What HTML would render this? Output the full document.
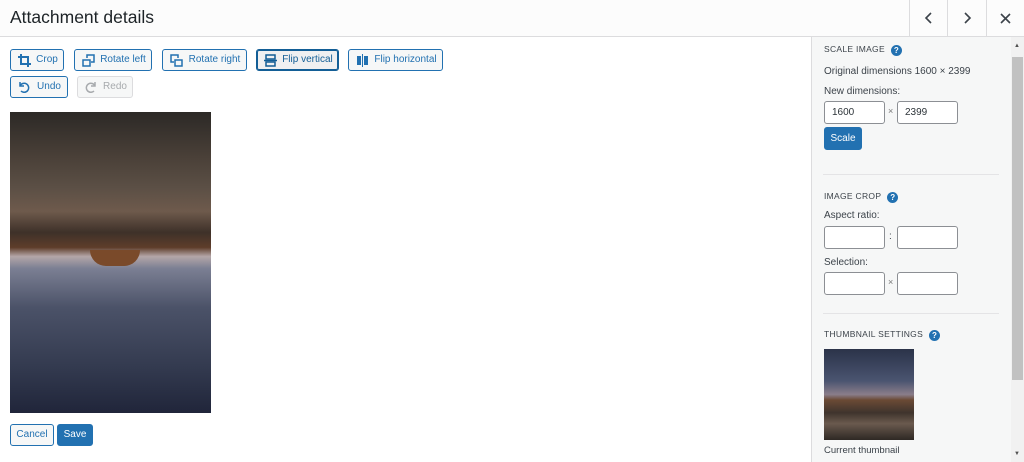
<!DOCTYPE html>
<html><head><style>
*{box-sizing:border-box;margin:0;padding:0}
body{width:1024px;height:462px;overflow:hidden;background:#fff;font-family:"Liberation Sans",sans-serif;color:#3c434a;font-size:10px;position:relative}
.hdr{position:absolute;left:0;top:0;width:1024px;height:37px;background:#fcfcfc;border-bottom:1px solid #dcdcde}
.hdr h1{position:absolute;left:10px;top:7px;font-size:17.5px;font-weight:normal;color:#1d2327}
.nav{position:absolute;top:0;height:36px;width:39px;border-left:1px solid #dcdcde}
.nav svg{position:absolute;left:14px;top:12px}
.b{position:absolute;height:22px;border:1px solid #2271b1;border-radius:3px;background:#f6f7f7;color:#2271b1;font-size:10px;line-height:20px;padding-left:20px;text-align:center;white-space:nowrap}
.b svg{position:absolute;left:7px;top:4px}
.b.dis{border-color:#dcdcde;color:#a7aaad}
.b.act{border-color:#135e96;box-shadow:0 0 0 1px #135e96 inset;background:#f0f0f1}
.side{position:absolute;left:811px;top:37px;width:213px;height:425px;background:#f6f7f7;border-left:1px solid #dcdcde}
.t{position:absolute;font-size:10px;color:#3c434a;white-space:nowrap}
.h{position:absolute;font-size:8.5px;text-transform:uppercase;color:#3c434a;letter-spacing:.3px;white-space:nowrap}
.q{display:inline-block;width:11px;height:11px;border-radius:50%;background:#2271b1;color:#fff;font-size:8px;font-weight:bold;text-align:center;line-height:11px;margin-left:6px;vertical-align:-1px}
.in{position:absolute;width:61px;height:23px;border:1px solid #8c8f94;border-radius:3px;background:#fff;padding-left:7px;line-height:21px;font-size:10px;color:#2c3338}
.hr{position:absolute;left:823px;width:176px;height:1px;background:#e4e4e6}
</style></head><body>
<div class="hdr"><h1>Attachment details</h1>
<div class="nav" style="left:909px"><svg width="10" height="12" viewBox="0 0 10 12" fill="none" stroke="#3c434a" stroke-width="1.6"><path d="M7 1L2 6l5 5"/></svg></div>
<div class="nav" style="left:947px"><svg width="10" height="12" viewBox="0 0 10 12" fill="none" stroke="#3c434a" stroke-width="1.6"><path d="M3 1l5 5-5 5"/></svg></div>
<div class="nav" style="left:986px;width:38px"><svg width="11" height="11" viewBox="0 0 11 11" fill="none" stroke="#3c434a" stroke-width="1.6" style="left:13px;top:13px"><path d="M1 1l9 9M10 1l-9 9"/></svg></div></div>

<div class="b" style="left:10px;top:49px;width:54px"><svg width="13" height="13" viewBox="0 0 13 13" fill="none" stroke="#2271b1" stroke-width="2"><path d="M3 0v10h10M0 3h10v10"/></svg>Crop</div>
<div class="b" style="left:74px;top:49px;width:78px"><svg width="13" height="13" viewBox="0 0 13 13" fill="none" stroke="#2271b1" stroke-width="1.5"><rect x="1" y="6" width="7" height="6"/><path d="M5 4V1h7v7H9"/></svg>Rotate left</div>
<div class="b" style="left:162px;top:49px;width:85px"><svg width="13" height="13" viewBox="0 0 13 13" fill="none" stroke="#2271b1" stroke-width="1.5"><rect x="5" y="6" width="7" height="6"/><path d="M8 4V1H1v7h3"/></svg>Rotate right</div>
<div class="b act" style="left:256px;top:49px;width:83px"><svg width="13" height="13" viewBox="0 0 13 13" fill="none" stroke="#135e96" stroke-width="1.5"><rect x="2" y="1" width="9" height="4"/><rect x="2" y="8" width="9" height="4"/><path d="M0 6.5h13"/></svg><span style="color:#135e96">Flip vertical</span></div>
<div class="b" style="left:348px;top:49px;width:95px"><svg width="13" height="13" viewBox="0 0 13 13" fill="#2271b1"><rect x="1" y="2" width="4" height="9"/><rect x="8" y="2" width="4" height="9"/><rect x="6" y="0" width="1" height="13"/></svg>Flip horizontal</div>
<div class="b" style="left:10px;top:76px;width:58px"><svg width="12" height="12" viewBox="0 0 12 12" fill="none" stroke="#2271b1" stroke-width="1.5"><path d="M2 1v4h4M2 5a4.5 4.5 0 1 1 1 5"/></svg>Undo</div>
<div class="b dis" style="left:77px;top:76px;width:56px"><svg width="12" height="12" viewBox="0 0 12 12" fill="none" stroke="#a7aaad" stroke-width="1.5"><path d="M10 1v4H6M10 5a4.5 4.5 0 1 0-1 5"/></svg>Redo</div>

<div style="position:absolute;left:10px;top:112px;width:201px;height:301px;background:linear-gradient(180deg,#2c2926 0%,#4a4038 15%,#5b4f45 25%,#6e5a4c 33%,#3e3129 40%,#5e3d2a 45%,#b4a6a8 48%,#7b7f93 52%,#4b5268 65%,#333a4f 85%,#20253a 100%)"></div>
<div style="position:absolute;left:90px;top:250px;width:50px;height:16px;background:#7a4a2a;border-radius:0 0 20px 20px"></div>

<div class="b" style="left:10px;top:424px;width:44px;padding-left:0">Cancel</div>
<div class="b" style="left:57px;top:424px;width:36px;padding-left:0;background:#2271b1;color:#fff">Save</div>

<div class="side"></div>
<div style="position:absolute;left:1011px;top:37px;width:13px;height:425px;background:#f1f1f1"></div>
<div style="position:absolute;left:1012px;top:57px;width:11px;height:323px;background:#c1c1c1"></div>
<div style="position:absolute;left:1014px;top:43px;font-size:6px;color:#505050">&#9650;</div>
<div style="position:absolute;left:1014px;top:451px;font-size:6px;color:#505050">&#9660;</div>

<div class="h" style="left:824px;top:44px">Scale Image<span class="q">?</span></div>
<div class="t" style="left:824px;top:66px">Original dimensions 1600 × 2399</div>
<div class="t" style="left:824px;top:86px">New dimensions:</div>
<div class="in" style="left:824px;top:101px">1600</div>
<div class="t" style="left:888px;top:106px;font-size:9px;color:#777">×</div>
<div class="in" style="left:897px;top:101px">2399</div>
<div class="b" style="left:824px;top:127px;width:38px;height:23px;padding-left:0;background:#2271b1;color:#fff;line-height:21px">Scale</div>
<div class="hr" style="top:174px"></div>
<div class="h" style="left:824px;top:191px">Image Crop<span class="q">?</span></div>
<div class="t" style="left:824px;top:210px">Aspect ratio:</div>
<div class="in" style="left:824px;top:226px"></div>
<div class="t" style="left:889px;top:231px">:</div>
<div class="in" style="left:897px;top:226px"></div>
<div class="t" style="left:824px;top:257px">Selection:</div>
<div class="in" style="left:824px;top:272px"></div>
<div class="t" style="left:888px;top:277px;font-size:9px;color:#777">×</div>
<div class="in" style="left:897px;top:272px"></div>
<div class="hr" style="top:313px"></div>
<div class="h" style="left:824px;top:329px">Thumbnail Settings<span class="q">?</span></div>
<div style="position:absolute;left:824px;top:349px;width:90px;height:91px;background:linear-gradient(180deg,#2b3349 0%,#4a5470 35%,#8a7d8a 50%,#6b4a35 56%,#3f342d 70%,#6a5a4e 82%,#2e2824 100%)"></div>
<div class="t" style="left:824px;top:445px;font-size:9.5px">Current thumbnail</div>
</body></html>
